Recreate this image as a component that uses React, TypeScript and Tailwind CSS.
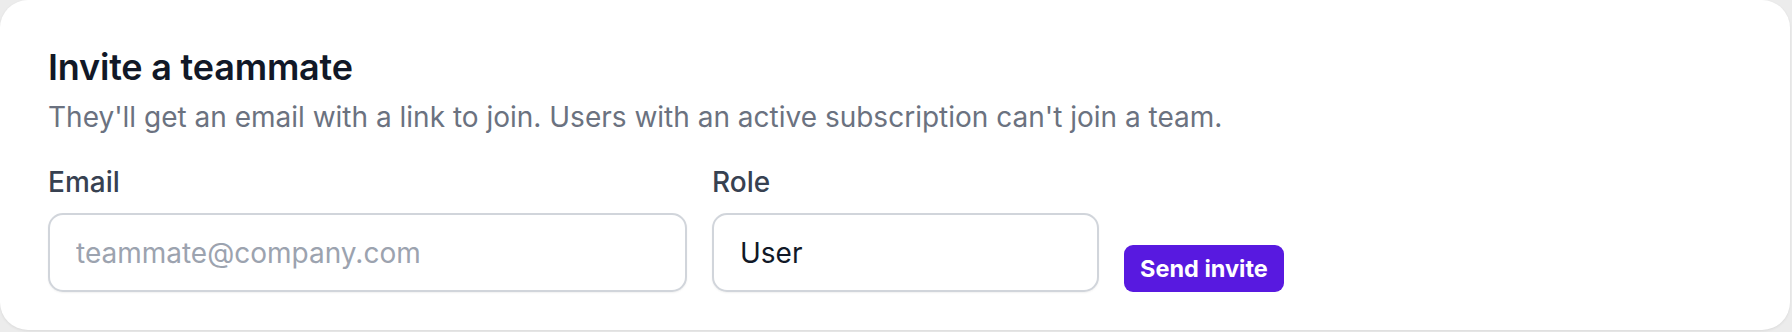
export default function App() {
  return (
    <div className="w-[1792px] h-[332px] bg-[#ececec] font-['Inter',sans-serif]">
      <div className="w-[1790px] h-[330px] bg-white rounded-[28px] shadow-[0_1px_3px_rgba(0,0,0,0.08)] px-[48px] pt-[43px]">
        <h2 className="text-[36px] leading-[48px] font-semibold text-[#111827] tracking-[-0.2px]">
          Invite a teammate
        </h2>
        <p className="mt-[7px] text-[28px] leading-[38px] text-[#6b7280]">
          They'll get an email with a link to join. Users with an active subscription can't join a team.
        </p>

        <div className="mt-[25px] flex items-end gap-[25px]">
          <div className="flex flex-col">
            <label className="text-[28px] leading-[42px] font-medium text-[#374151]">Email</label>
            <input
              type="email"
              placeholder="teammate@company.com"
              className="mt-[10px] w-[639px] h-[79px] rounded-[15px] border-2 border-[#d1d5db] bg-white px-[26px] text-[28px] text-[#111827] placeholder:text-[#9ca3af] shadow-[0_1px_2px_rgba(0,0,0,0.06)] outline-none"
            />
          </div>
          <div className="flex flex-col">
            <label className="text-[28px] leading-[42px] font-medium text-[#374151]">Role</label>
            <div className="mt-[10px] w-[387px] h-[79px] rounded-[15px] border-2 border-[#d1d5db] bg-white px-[26px] flex items-center text-[28px] text-[#111827] shadow-[0_1px_2px_rgba(0,0,0,0.06)]">
              User
            </div>
          </div>
          <button className="h-[47px] px-[16px] rounded-[9px] bg-[#5819e0] text-white text-[23.5px] font-bold leading-none">
            Send invite
          </button>
        </div>
      </div>
    </div>
  );
}
